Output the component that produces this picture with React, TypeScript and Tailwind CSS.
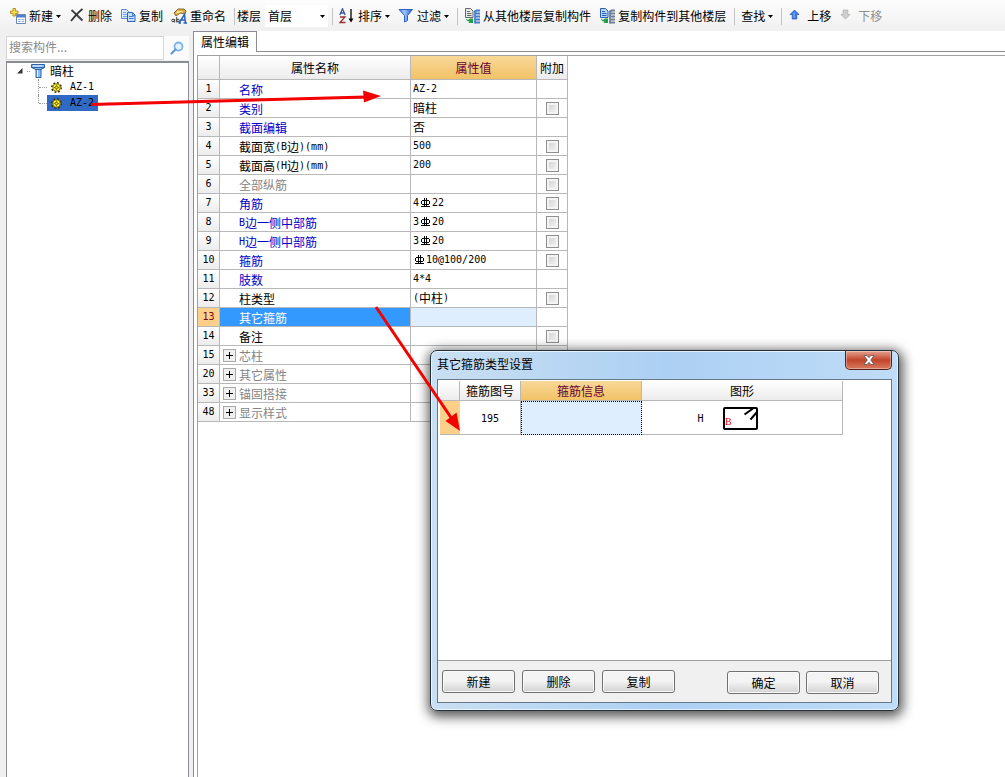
import React from "react";

function MixedText({ text }: { text: string }) {
  const parts = text.match(/[\x20-\x7e]+|[^\x20-\x7e]+/g) ?? [];
  return (
    <>
      {parts.map((part, i) =>
        part.includes("Φ") ? (
          <RebarSign key={i} />
        ) : /^[\x20-\x7e]+$/.test(part) ? (
          <span key={i} className="font-['DejaVu_Sans_Mono',monospace] text-[10px] whitespace-pre">
            {part}
          </span>
        ) : (
          <span key={i}>{part}</span>
        ),
      )}
    </>
  );
}

function RebarSign() {
  return (
    <svg className="mx-[2px] h-[10px] w-[9px] shrink-0" viewBox="0 0 9 10" fill="none" stroke="currentColor" role="img" aria-label="钢筋">
      <path d="M3.5 0v9M5.500 0v9M1 2.500h7M.5 3v3M8.500 3v3M1 6.500h7M0 8.500h9" shapeRendering="crispEdges" />
    </svg>
  );
}

function Caret() {
  return (
    <svg className="h-[3px] w-[5px] shrink-0" viewBox="0 0 5 3" aria-hidden="true">
      <path d="M0 0h5L2.5 3z" fill="#000" />
    </svg>
  );
}

function Icon({ children }: { children: React.ReactNode }) {
  return (
    <svg className="size-4 shrink-0" viewBox="0 0 16 16" fill="none" aria-hidden="true">
      {children}
    </svg>
  );
}

const NewIcon = () => (
  <Icon>
    <path d="M3 .5h2.500V3H8v2.500H5.500V8H3V5.500H.5V3H3z" fill="#f7dc4a" stroke="#b8922a" />
    <path d="M6.500 6.500h9v9h-9z" fill="#fff" stroke="#6d87b5" />
    <path d="M7 7h8v2.500H7z" fill="#4e7fd0" />
    <path d="M8 11h2.500v1H8zM11.500 11H14v1h-2.500zM8 13h2.500v1H8zM11.500 13H14v1h-2.500z" fill="#8fadd8" />
  </Icon>
);

const DeleteIcon = () => (
  <Icon>
    <path d="M2.500 2C6 5 9.500 9 13.500 12.500" stroke="#444" strokeWidth="2" />
    <path d="M13.500 1C9.500 4 6 8 2 13" stroke="#333" strokeWidth="1.800" />
  </Icon>
);

const CopyIcon = () => (
  <Icon>
    <path d="M1.500 1.500h5l2 2v7h-7z" fill="#d9eaff" stroke="#5b8bd0" />
    <path d="M3 4.500h3M3 6.500h4M3 8.500h4" stroke="#79a6e2" />
    <path d="M7.500 4.500h5l2.500 2.500v6.500H7.500z" fill="#c4deff" stroke="#2f62b5" />
    <path d="M12.500 4.500v3H15M9 8.500h4.500M9 10.500h4.500" stroke="#4a7fd0" />
  </Icon>
);

const RenameIcon = () => (
  <Icon>
    <path d="M3 5l4-4h6l2 2-1 3-5-1-4 3z" fill="#d9a63b" stroke="#8e6b25" />
    <path d="M6 3l6 1M5 5l4-1" stroke="#fff0a8" />
    <circle cx="2" cy="12.500" r="1.300" stroke="#444" />
    <path d="M3.700 11v3.500M5.700 9v5.500" stroke="#444" />
    <circle cx="7" cy="12.500" r="1.300" stroke="#444" />
    <path d="M8 15L13.500 6.500 14.500 15M10 12h4M12.500 15H16M7.500 15h2.500" stroke="#2763be" strokeWidth="1.500" />
  </Icon>
);

const SortIcon = () => (
  <Icon>
    <path d="M.8 7L3.500.8 6.200 7M1.800 5h3.500" stroke="#3456a4" strokeWidth="1.300" />
    <path d="M1 9h5L1 14.500h5.500" stroke="#9c2f38" strokeWidth="1.300" />
    <path d="M12 1v11" stroke="#000" strokeWidth="1.300" />
    <path d="M9.500 10.500h5L12 14.500z" fill="#000" />
  </Icon>
);

const FilterIcon = () => (
  <Icon>
    <defs>
      <linearGradient id="funnel" x1="0" x2="1">
        <stop stopColor="#4d8deb" />
        <stop offset=".4" stopColor="#9cc6ff" />
        <stop offset="1" stopColor="#1d58c4" />
      </linearGradient>
    </defs>
    <path d="M1 1.500h13.500L9.500 7.500v5l-3 1.500V7.500z" fill="url(#funnel)" stroke="#2c62c4" />
  </Icon>
);

function FloorCopyIcon({ blue = false }: { blue?: boolean }) {
  return (
    <Icon>
      <path d="M1.500.5h5L9 3v6.500H1.500z" fill={blue ? "#b9d4ff" : "#e9e9e9"} stroke={blue ? "#2c5fb8" : "#666"} />
      <path d="M3 3.500h3M3 5.500h4.500M3 7.500h4.500" stroke={blue ? "#2c5fb8" : "#666"} />
      <path d="M2 10.500l2 1.500 2-1.500h3v4.500H4.500l1-1.500C3.500 13.500 2 12.500 2 10.500z" fill="#23a047" />
      <path d="M11 2.500v13" stroke={blue ? "#55697e" : "#2f6bbd"} strokeWidth="1.500" />
      <path d="M16 2.500h-3.500L11 4M16 5.500h-4.500M16 8.500h-4.500M16 11.500h-4.500M16 14.500h-5" stroke={blue ? "#6d8194" : "#3f7fce"} strokeWidth="2" />
    </Icon>
  );
}

const UpIcon = () => (
  <Icon>
    <path d="M6.500 2L11 6.500H8.800V11H4.200V6.500H2z" fill="#3d7be0" stroke="#1f54b3" strokeWidth=".7" />
    <path d="M6 4.500V10" stroke="#8fb9ff" />
  </Icon>
);

const DownIcon = () => (
  <Icon>
    <path d="M6.500 11L11 6.500H8.800V2H4.200v4.500H2z" fill="#cfcfcf" stroke="#aaa" strokeWidth=".7" />
  </Icon>
);

const GearIcon = () => (
  <svg className="size-[11px] shrink-0" viewBox="0 0 11 11" fill="none" aria-hidden="true">
    <circle cx="5.500" cy="5.500" r="4.700" stroke="#333000" strokeWidth="1.600" strokeDasharray="1.850 1.840" />
    <circle cx="5.500" cy="5.500" r="3.800" fill="#ffee22" stroke="#6b6200" strokeWidth=".8" />
    <path d="M5.500 2.500v6M2.500 5.500h6" stroke="#5b5200" strokeWidth=".6" />
    <circle cx="5.500" cy="5.500" r="1.300" fill="#fff04c" stroke="#3a3500" strokeWidth=".7" />
  </svg>
);

const ColumnIcon = () => (
  <Icon>
    <path d="M1.500 1.500h13v3l-3.500 2v8H6v-8l-4.500-2z" fill="#8fbbf2" stroke="#2d62a8" />
    <path d="M1.500 4.500h13M5.500 6.500h6" stroke="#2d62a8" />
    <path d="M7.500 7v7M3 3h9" stroke="#e6f2ff" />
  </Icon>
);

type ToolProps = { icon?: React.ReactNode; label: string; menu?: boolean; disabled?: boolean };

function Tool({ icon, label, menu, disabled }: ToolProps) {
  return (
    <button type="button" disabled={disabled} className="flex h-6 shrink-0 items-center gap-[3px] px-1 whitespace-nowrap disabled:text-[#8f8f8f]">
      {icon}
      <span>{label}</span>
      {menu && <Caret />}
    </button>
  );
}

const Separator = () => <span className="mr-[2px] ml-1 h-[17px] w-px shrink-0 bg-[#c4c4c4]" />;

function Toolbar() {
  return (
    <header className="flex h-[31px] items-center overflow-hidden bg-linear-to-b from-[#fdfdfd] to-[#f0f0f0] pt-px pl-[6px]">
      <Tool icon={<NewIcon />} label="新建" menu />
      <Tool icon={<DeleteIcon />} label="删除" />
      <Tool icon={<CopyIcon />} label="复制" />
      <Tool icon={<RenameIcon />} label="重命名" />
      <Separator />
      <label htmlFor="floor" className="shrink-0">楼层</label>
      <span className="relative ml-1 flex shrink-0 items-center">
        <select id="floor" className="h-[22px] w-[63px] appearance-none bg-white pl-[3px]">
          <option>首层</option>
        </select>
        <span className="pointer-events-none absolute right-[3px]">
          <Caret />
        </span>
      </span>
      <Separator />
      <Tool icon={<SortIcon />} label="排序" menu />
      <Tool icon={<FilterIcon />} label="过滤" menu />
      <Separator />
      <Tool icon={<FloorCopyIcon />} label="从其他楼层复制构件" />
      <Tool icon={<FloorCopyIcon blue />} label="复制构件到其他楼层" />
      <Separator />
      <Tool label="查找" menu />
      <Separator />
      <Tool icon={<UpIcon />} label="上移" />
      <Tool icon={<DownIcon />} label="下移" disabled />
    </header>
  );
}

function TreeLeaf({ name, selected, last }: { name: string; selected?: boolean; last?: boolean }) {
  return (
    <li className="flex h-4">
      <span className={last ? "h-2 w-px border-l border-dotted border-[#999]" : "h-4 w-px border-l border-dotted border-[#999]"} />
      <span className="mt-2 h-px w-2 border-t border-dotted border-[#999]" />
      <button type="button" className={selected ? "flex items-center gap-2 bg-[#316ac5] pr-1 pl-1" : "flex items-center gap-2 pr-1 pl-1"}>
        <GearIcon />
        <MixedText text={name} />
      </button>
    </li>
  );
}

function Sidebar() {
  return (
    <aside className="flex w-[183px] shrink-0 flex-col pt-[5px]">
      <form className="flex h-[24px]" onSubmit={(e) => e.preventDefault()}>
        <input
          type="text"
          aria-label="搜索构件"
          placeholder="搜索构件..."
          className="min-w-0 flex-1 border border-[#d5d5d5] bg-white pb-[2px] pl-[2px] text-xs text-black outline-none placeholder:text-[#8a8a8a]"
        />
        <button type="submit" aria-label="搜索" className="flex w-[25px] items-center justify-center bg-[#fbfbfb]">
          <svg className="size-[14px]" viewBox="0 0 14 14" fill="none" aria-hidden="true">
            <circle cx="8.500" cy="5.500" r="4" fill="#e4f2ff" stroke="#7db4e6" strokeWidth="1.800" />
            <path d="M5.500 8.500L1.500 12.500" stroke="#5f9bd6" strokeWidth="2.200" strokeLinecap="round" />
          </svg>
        </button>
      </form>
      <div className="mt-px flex-1 border border-t-2 border-b-0 border-[#8a8e94] bg-white pl-[10px]">
        <div className="flex h-4 items-center">
          <svg className="size-[6px]" viewBox="0 0 6 6" aria-hidden="true">
            <path d="M5.500 0v5.500H0z" fill="#333" />
          </svg>
          <span className="ml-1 h-px w-[3px] border-t border-dotted border-[#999]" />
          <ColumnIcon />
          <span className="ml-1">暗柱</span>
        </div>
        <ul className="pl-[21px]">
          <TreeLeaf name="AZ-1" />
          <TreeLeaf name="AZ-2" selected last />
        </ul>
      </div>
    </aside>
  );
}

type Tone = "blue" | "black" | "gray";
type Row = { no: number; name: string; value?: string; tone: Tone; check?: boolean; group?: boolean; selected?: boolean };

const rows: Row[] = [
  { no: 1, name: "名称", value: "AZ-2", tone: "blue" },
  { no: 2, name: "类别", value: "暗柱", tone: "blue", check: true },
  { no: 3, name: "截面编辑", value: "否", tone: "blue" },
  { no: 4, name: "截面宽(B边)(mm)", value: "500", tone: "black", check: true },
  { no: 5, name: "截面高(H边)(mm)", value: "200", tone: "black", check: true },
  { no: 6, name: "全部纵筋", tone: "gray", check: true },
  { no: 7, name: "角筋", value: "4Φ22", tone: "blue", check: true },
  { no: 8, name: "B边一侧中部筋", value: "3Φ20", tone: "blue", check: true },
  { no: 9, name: "H边一侧中部筋", value: "3Φ20", tone: "blue", check: true },
  { no: 10, name: "箍筋", value: "Φ10@100/200", tone: "blue", check: true },
  { no: 11, name: "肢数", value: "4*4", tone: "blue" },
  { no: 12, name: "柱类型", value: "(中柱)", tone: "black", check: true },
  { no: 13, name: "其它箍筋", tone: "black", selected: true },
  { no: 14, name: "备注", tone: "black", check: true },
  { no: 15, name: "芯柱", tone: "gray", group: true },
  { no: 20, name: "其它属性", tone: "gray", group: true },
  { no: 33, name: "锚固搭接", tone: "gray", group: true },
  { no: 48, name: "显示样式", tone: "gray", group: true },
];

const tones: Record<Tone, string> = { blue: "text-[#0000c8]", black: "text-black", gray: "text-[#858585]" };
const headCell = "border-r border-b border-[#b8b8b8] bg-linear-to-b from-white to-[#ececec] p-0 font-normal";
const goldHead = "border-r border-b border-[#b8b8b8] bg-linear-to-b from-[#f8d898] to-[#f2c265] p-0 font-normal text-[#650032]";
const cell = "border-r border-b border-[#b8b8b8] p-0";

function PropertyTable() {
  return (
    <table className="w-[370px] table-fixed border-separate border-spacing-0 text-left">
      <colgroup>
        <col className="w-[22px]" />
        <col className="w-[191px]" />
        <col className="w-[126px]" />
        <col className="w-[31px]" />
      </colgroup>
      <thead>
        <tr className="h-6 text-center">
          <th className={headCell} aria-label="序号" />
          <th scope="col" className={headCell}>属性名称</th>
          <th scope="col" className={goldHead}>属性值</th>
          <th scope="col" className={headCell}>附加</th>
        </tr>
      </thead>
      <tbody>
        {rows.map((row) => (
          <tr key={row.no} className="h-[19px]">
            <th
              scope="row"
              className={
                row.selected
                  ? "border-r border-b border-[#b8b8b8] bg-[#fcd088] p-0 font-normal text-[#7a0020]"
                  : headCell
              }
            >
              <div className="flex h-[18px] items-center justify-center">
                <MixedText text={String(row.no)} />
              </div>
            </th>
            <td className={row.selected ? "border-r border-b border-[#b8b8b8] bg-[#3399ff] p-0 text-white" : cell}>
              <div className={row.selected ? "flex h-[18px] items-center pl-[3px] text-white" : `flex h-[18px] items-center pl-[3px] ${tones[row.tone]}`}>
                <span className="w-4 shrink-0">
                  {row.group && (
                    <button type="button" aria-label={`展开${row.name}`} className="flex size-[13px] items-center justify-center border border-[#aaa] bg-[#f0f0f0] text-black">
                      <svg className="size-[7px]" viewBox="0 0 7 7" aria-hidden="true">
                        <path d="M3 0h1v3h3v1H4v3H3V4H0V3h3z" fill="#000" />
                      </svg>
                    </button>
                  )}
                </span>
                <span className="flex items-center pt-[2px]">
                  <MixedText text={row.name} />
                </span>
              </div>
            </td>
            <td className={row.selected ? "border-r border-b border-[#b8b8b8] bg-[#dfeeff] p-0" : cell}>
              <div className="flex h-[18px] items-center pl-[2px]">{row.value && <MixedText text={row.value} />}</div>
            </td>
            <td className={cell}>
              {row.check && (
                <input
                  type="checkbox"
                  aria-label={`附加${row.name}`}
                  className="mx-auto block size-[13px] appearance-none border border-[#8e8f8f] bg-linear-to-br from-[#cfcfcf] to-[#f8f8f8] shadow-[inset_0_0_0_2px_#f4f4f4]"
                />
              )}
            </td>
          </tr>
        ))}
      </tbody>
    </table>
  );
}

function DialogButton({ label }: { label: string }) {
  return (
    <button
      type="button"
      className="h-[23px] w-[73px] rounded-[3px] border border-[#707070] bg-linear-to-b from-[#f4f4f4] from-45% to-[#d2d2d2] shadow-[inset_0_0_0_1px_#fafafa]"
    >
      {label}
    </button>
  );
}

function StirrupDialog() {
  return (
    <section
      role="dialog"
      aria-labelledby="dialog-title"
      className="absolute top-[350px] left-[430px] flex h-[361px] w-[469px] flex-col rounded-[7px] border border-[#23303c] bg-linear-to-r from-[#c9dff2] via-[#acd0f3] to-[#bfdcf8] px-[6px] pb-[7px] shadow-[1px_3px_12px_3px_rgba(0,0,0,0.65),inset_0_0_0_1px_rgba(255,255,255,0.65)]"
    >
      <div className="flex h-[28px] shrink-0 justify-between">
        <h2 id="dialog-title" className="pt-[5px] leading-4">其它箍筋类型设置</h2>
        <button
          type="button"
          aria-label="关闭"
          className="flex h-[19px] w-[47px] items-center justify-center rounded-b-[5px] border border-t-0 border-[#561f1b] bg-linear-to-b from-[#e3a08f] via-[#c2432c] via-50% to-[#d87a5c] shadow-[inset_0_0_0_1px_rgba(255,255,255,0.35)]"
        >
          <svg className="h-[10px] w-[12px]" viewBox="0 0 12 10" aria-hidden="true">
            <path d="M1 .5h3.200L6 2.700 7.800.5H11L7.800 5 11 9.500H7.800L6 7.300 4.200 9.500H1L4.200 5z" fill="#fff" stroke="#565656" strokeWidth=".8" />
          </svg>
        </button>
      </div>
      <div className="flex flex-1 flex-col border border-[#66788a] bg-[#f0f0f0]">
        <div className="flex-1 border-b border-[#a0a0a0] bg-white pt-px pl-[2px]">
          <table className="w-[403px] table-fixed border-separate border-spacing-0 text-center">
            <colgroup>
              <col className="w-[20px]" />
              <col className="w-[61px]" />
              <col className="w-[121px]" />
              <col className="w-[201px]" />
            </colgroup>
            <thead>
              <tr className="h-5">
                <th className={headCell} aria-label="行" />
                <th scope="col" className={headCell}>箍筋图号</th>
                <th scope="col" className={goldHead}>箍筋信息</th>
                <th scope="col" className={headCell}>图形</th>
              </tr>
            </thead>
            <tbody>
              <tr className="h-[34px]">
                <td className="border-b border-[#b8b8b8] bg-[#fcd088] p-0" />
                <td className={cell}>
                  <MixedText text="195" />
                </td>
                <td className="border border-dotted border-black bg-[#dfeeff] p-0" />
                <td className={cell}>
                  <div className="flex items-center justify-center gap-[19px] pt-[2px] pr-[29px]">
                    <MixedText text="H" />
                    <svg className="h-[23px] w-[35px]" viewBox="0 0 35 23" fill="none" role="img" aria-label="箍筋图形">
                      <rect x="1" y="1" width="33" height="21" rx="1" stroke="#000" strokeWidth="2" />
                      <path d="M21.500 7.500L30 1.500M27.500 12.500L34 5" stroke="#000" strokeWidth="2" />
                      <text x="2" y="18" fontSize="10" fontFamily="Liberation Serif" fill="#e00000">B</text>
                    </svg>
                  </div>
                </td>
              </tr>
            </tbody>
          </table>
        </div>
        <footer className="flex h-[41px] shrink-0 items-center justify-between pr-[12px] pl-1">
          <div className="flex gap-[7px]">
            <DialogButton label="新建" />
            <DialogButton label="删除" />
            <DialogButton label="复制" />
          </div>
          <div className="flex gap-[6px] pt-[2px]">
            <DialogButton label="确定" />
            <DialogButton label="取消" />
          </div>
        </footer>
      </div>
    </section>
  );
}

function Arrows() {
  return (
    <svg className="pointer-events-none absolute top-0 left-0 h-[440px] w-[470px]" viewBox="0 0 470 440" aria-hidden="true">
      <path d="M91 104.500L366 97" stroke="#f40000" strokeWidth="3" />
      <path d="M363 90.500L381 96L364 102.500z" fill="#f40000" />
      <path d="M376 307L452 419" stroke="#f40000" strokeWidth="3" />
      <path d="M460 431L445.500 421L456.500 412.500z" fill="#f40000" />
    </svg>
  );
}

export default function App() {
  return (
    <div className="relative flex min-h-screen flex-col overflow-hidden bg-[#f0f0f0] font-['Noto_Sans_CJK_SC',sans-serif] text-xs text-black">
      <Toolbar />
      <div className="flex flex-1 pl-[6px]">
        <Sidebar />
        <main className="ml-1 flex min-w-0 flex-1 flex-col bg-white">
          <div className="flex h-[21px]" role="tablist">
            <button type="button" role="tab" aria-selected="true" className="w-[64px] shrink-0 border border-b-0 border-[#8a8e94] bg-white">
              属性编辑
            </button>
            <div className="flex-1 border-b border-[#8a8e94]" />
          </div>
          <div className="flex flex-1 border-l border-[#8a8e94] pt-[3px] pl-[3px]">
            <div className="flex-1 border-t border-l border-[#a0a0a0]">
              <PropertyTable />
            </div>
          </div>
        </main>
      </div>
      <StirrupDialog />
      <Arrows />
    </div>
  );
}
